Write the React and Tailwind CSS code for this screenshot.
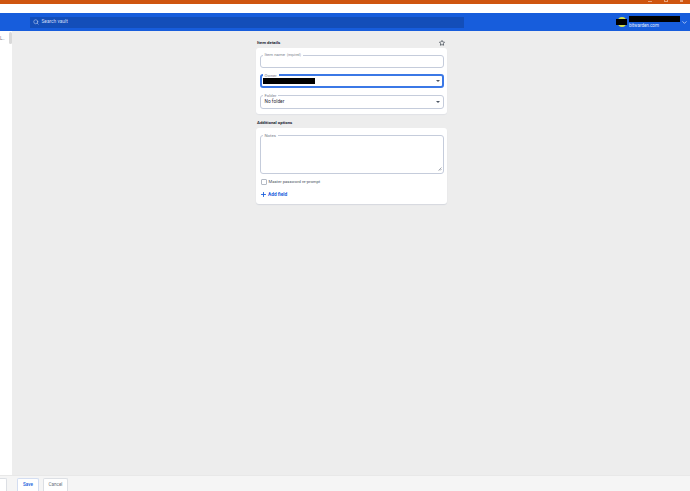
import { ChevronDown, Plus, Search, Star } from "lucide-react";

const fontStack = "font-['Roboto','Liberation_Sans',sans-serif]";

// outlined field with its label cut into the border
const Field = ({ label, hint, focused, className, children }) => (
  <fieldset
    className={`rounded-[3px] ${
      focused ? "border-2 border-[#3b78e6]" : "border border-[#c5ccdb]"
    } ${className}`}
  >
    <legend
      className={`px-[2px] text-[4.3px] leading-[5px] text-[#7b818c] ${
        focused ? "ml-[1px]" : "ml-[2px]"
      }`}
    >
      {label}
      {hint && <span className="ml-[2px] text-[3.2px]">{hint}</span>}
    </legend>
    {children}
  </fieldset>
);

const Caret = () => (
  <span className="ml-auto h-0 w-0 border-x-[2px] border-t-[2px] border-x-transparent border-t-[#4b5563]" />
);

export default function App() {
  return (
    <div className={`flex h-[491px] w-[690px] flex-col overflow-hidden bg-[#ededed] ${fontStack}`}>
      {/* window title bar */}
      <div className="flex h-[4px] shrink-0 items-start justify-end gap-[12px] bg-[#cf5510] pr-[7px]">
        <span className="mt-[1px] h-[1px] w-[4px] bg-[#e9a47c]" />
        <span className="h-[2px] w-[4px] border-x border-b border-[#e9a47c]" />
        <span className="h-[2px] w-[3px] bg-[#e9a47c]" />
      </div>
      <div className="h-[9px] shrink-0 bg-white" />

      {/* header */}
      <header className="flex h-[18px] shrink-0 items-center bg-[#175ddc] pl-[30px] pr-[2px]">
        <div className="flex h-[11px] w-[434px] items-center gap-[2.5px] bg-[#134eb9] pl-[3px] text-[4.8px] text-[#cfdcf7]">
          <Search size={6} strokeWidth={2} />
          <span>Search vault</span>
        </div>
        <div className="ml-auto flex items-center">
          <div className="relative mr-[2px] flex h-[11px] w-[11px] justify-center">
            <div className="h-[10px] w-[8px] rounded-full bg-[#d6e04a]" />
            <div className="absolute left-0 right-0 top-[2px] h-[6px] bg-black" />
          </div>
          <div className="flex w-[51px] flex-col">
            <div className="h-[6px] bg-black" />
            <span className="mt-[1px] text-[4.5px] leading-[6px] text-[#e3ebfa]">bitwarden.com</span>
          </div>
          <ChevronDown size={7} strokeWidth={2} className="ml-[1px] text-white" />
        </div>
      </header>

      <div className="flex min-h-0 flex-1">
        {/* sidebar */}
        <aside className="flex w-[12px] shrink-0 justify-between bg-white">
          <span className="mt-[5px] text-[4.5px] leading-[6px] text-[#6b7280]">L..</span>
          <span className="mt-[1px] h-[12px] w-[3px] rounded-[2px] bg-[#d9d9d9]" />
        </aside>

        {/* form */}
        <main className="flex-1 pl-[244px] pt-[7px]">
          <div className="w-[191px]">
            <div className="flex h-[10px] items-center justify-between pl-[1px] pr-[2px]">
              <h2 className="text-[4.4px] font-bold text-[#1f2937]">Item details</h2>
              <Star size={6} strokeWidth={2.5} className="text-[#1f2937]" />
            </div>
            <section className="flex flex-col gap-[5px] rounded-[3px] bg-white px-[3.5px] pb-[5px] pt-[4px] shadow-[0_1px_1px_#e0e2e6]">
              <Field label="Item name" hint="(required)" className="h-[15.5px]" />
              <Field label="Owner" focused className="h-[15.5px]">
                <div className="flex h-[7px] items-center pl-[1px] pr-[2px]">
                  <div className="h-[6px] w-[52px] bg-black" />
                  <Caret />
                </div>
              </Field>
              <Field label="Folder" className="h-[15.5px]">
                <div className="flex h-[7px] items-center pl-[4px] pr-[3px] text-[4.8px] text-[#1f2937]">
                  No folder
                  <Caret />
                </div>
              </Field>
            </section>

            <h2 className="mt-[5px] pl-[1px] text-[4.3px] font-bold leading-[8px] text-[#1f2937]">
              Additional options
            </h2>
            <section className="mt-[1.5px] flex flex-col rounded-[3px] bg-white px-[3.5px] pb-[5.5px] pt-[4.5px] shadow-[0_1px_1px_#d5d8de]">
              <Field label="Notes" className="h-[41.7px]">
                <div className="flex h-[34px] items-end justify-end pb-[1px] pr-[1px]">
                  <svg viewBox="0 0 4 4" className="h-[4px] w-[4px] stroke-[#6b7280]">
                    <path d="M0.5 3.5 L3.5 0.5 M2 3.5 L3.5 2" strokeWidth="0.6" />
                  </svg>
                </div>
              </Field>
              <label className="mt-[5px] flex items-center gap-[2px] pl-[1px] text-[4.2px] leading-[6px] text-[#4b5563]">
                <span className="h-[6px] w-[6px] rounded-[1px] border border-[#b4bac4] bg-white" />
                Master password re-prompt
              </label>
              <button className="mt-[6px] flex items-center gap-[1.5px] text-[4.8px] font-bold leading-[7px] text-[#175ddc]">
                <Plus size={7} strokeWidth={3} />
                Add field
              </button>
            </section>
          </div>
        </main>
      </div>

      {/* footer */}
      <footer className="flex h-[16px] shrink-0 items-end border-t border-[#e8e8e8] bg-[#f5f5f5] text-[4.6px]">
        <div className="h-[13px] w-[7px] rounded-tr-[2px] border border-l-0 border-b-0 border-[#dcdfe4] bg-white" />
        <button className="ml-[10px] h-[13px] w-[22px] rounded-t-[2px] border border-b-0 border-[#d3ddf1] bg-white font-medium text-[#175ddc]">
          Save
        </button>
        <button className="ml-[4px] h-[13px] w-[25px] rounded-t-[2px] border border-b-0 border-[#dcdfe4] bg-white text-[#6b7280]">
          Cancel
        </button>
      </footer>
    </div>
  );
}
